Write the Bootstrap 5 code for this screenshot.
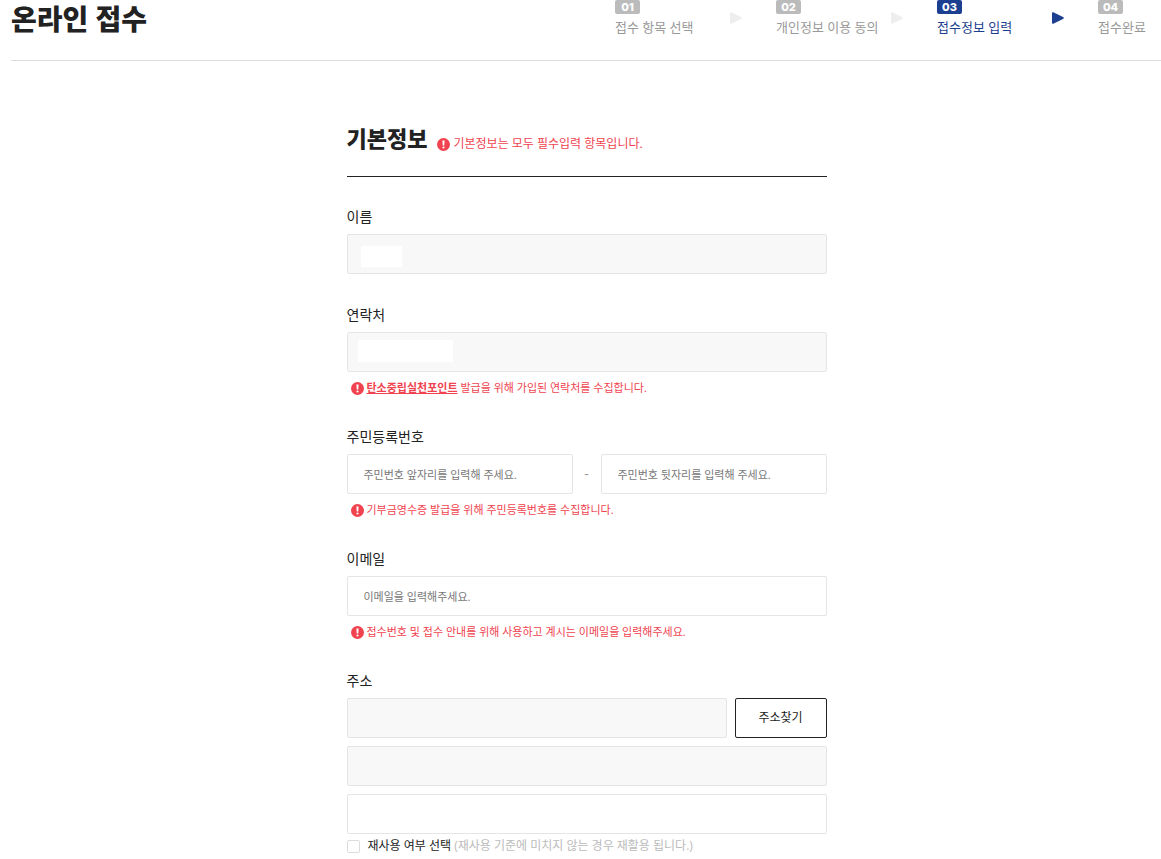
<!DOCTYPE html>
<html lang="ko">
<head>
<meta charset="utf-8">
<meta name="viewport" content="width=device-width, initial-scale=1">
<title>온라인 접수</title>
<link href="https://cdn.jsdelivr.net/npm/bootstrap@5.3.0/dist/css/bootstrap.min.css" rel="stylesheet">
<style>
  body { font-family: "Open Sans", "Noto Sans CJK KR", sans-serif; color: #222; font-size: 14px; line-height: 20px; }
  .page-head { margin-left: 11px; height: 61px; border-bottom: 1px solid #ddd; }
  .page-title { font-size: 28px; line-height: 38px; font-weight: 900; }
  .step { width: 161px; color: #999; }
  .step:last-child { width: 63px; }
  .step-no { background: #bbb; color: #fff; font: 800 11px/14px "Inter", sans-serif; width: 25px; border-radius: 2px; }
  .step-arrow { margin: 12px 34px 0 0; color: #eee; }
  .step.current { color: #1d3f8f; }
  .step.current .step-no { background: #1d3f8f; }
  .step.current .step-arrow { color: #1d3f8f; }
  .step-name { margin-top: 3px; font-size: 13px; }
  .form-wrap { max-width: 480px; }
  .form-outer { padding: 64px 0 4px 12px; }
  .section-head { padding-bottom: 24px; border-bottom: 1px solid #222; margin-bottom: 29px; }
  .section-title { font-size: 22px; line-height: 26px; font-weight: 900; }
  .notice { color: #f0434f; font-size: 11px; line-height: 16px; gap: 3px; }
  .notice a { color: inherit; font-weight: 700; }
  .section-head .notice { font-size: 12px; margin: 11px 0 0 10px; }
  .field-note { margin: 8px 0 0 4px; }
  .group { margin-bottom: 30px; }
  .group:last-child { margin-bottom: 0; }
  .group-label { display: block; margin-bottom: 6px; font-size: 14px; line-height: 22px; }
  .form-control.field { height: 40px; border: 1px solid #e5e5e5; border-radius: 2px; font-size: 11px; padding: 0 16px; color: #222; }
  .field::placeholder { color: #777; }
  .field[readonly] { background: #f8f8f8; }
  .dash { width: 28px; color: #999; }
  .mask { background: #fff; }
  .mask-name { left: 14px; top: 12px; width: 41px; height: 21px; }
  .mask-phone { left: 11px; top: 8px; width: 95px; height: 22px; }
  .btn.find { width: 92px; border: 1px solid #222; border-radius: 2px; font-size: 12px; color: #222; background: #fff; padding: 0; }
  .reuse { margin-top: 4px; font-size: 12px; line-height: 16px; gap: 8px; }
  .form-check-input.tick { width: 13px; height: 13px; margin: 0; border: 1px solid #ddd; border-radius: 2px; }
  .hint { color: #bbb; }
</style>
</head>
<body>
<svg class="d-none">
  <symbol id="alert" viewBox="0 0 13 13"><circle cx="6.500" cy="6.500" r="6.500" fill="#f0434f"/><path d="M5.400 2.500h2.200l-.3 5h-1.600z" fill="#fff"/><circle cx="6.500" cy="9.500" r="1.100" fill="#fff"/></symbol>
  <symbol id="arrow" viewBox="0 0 12 12"><path d="M0 1Q0 0 1.300 .3L11 5Q12.600 6 11 7L1.300 11.700Q0 12 0 11Z" fill="currentColor"/></symbol>
</svg>
<header class="page-head d-flex justify-content-between">
  <h1 class="page-title m-0">온라인 접수</h1>
  <ol class="list-unstyled d-flex m-0">
    <li class="step d-flex justify-content-between"><div><div class="step-no text-center">01</div><div class="step-name text-nowrap">접수 항목 선택</div></div><svg class="step-arrow flex-shrink-0" width="12" height="12"><use href="#arrow"/></svg></li>
    <li class="step d-flex justify-content-between"><div><div class="step-no text-center">02</div><div class="step-name text-nowrap">개인정보 이용 동의</div></div><svg class="step-arrow flex-shrink-0" width="12" height="12"><use href="#arrow"/></svg></li>
    <li class="step current d-flex justify-content-between" aria-current="step"><div><div class="step-no text-center">03</div><div class="step-name text-nowrap">접수정보 입력</div></div><svg class="step-arrow flex-shrink-0" width="12" height="12"><use href="#arrow"/></svg></li>
    <li class="step"><div class="step-no text-center">04</div><div class="step-name text-nowrap">접수완료</div></li>
  </ol>
</header>
<main class="form-outer">
  <form class="form-wrap mx-auto">
    <div class="section-head d-flex">
      <h2 class="section-title m-0">기본정보</h2>
      <p class="notice d-flex align-items-center mb-0"><svg width="13" height="13"><use href="#alert"/></svg><span>기본정보는 모두 필수입력 항목입니다.</span></p>
    </div>
    <div class="group">
      <label class="group-label" for="name">이름</label>
      <div class="position-relative"><input class="form-control field" id="name" type="text" readonly><span class="mask mask-name position-absolute"></span></div>
    </div>
    <div class="group">
      <label class="group-label" for="phone">연락처</label>
      <div class="position-relative"><input class="form-control field" id="phone" type="tel" readonly><span class="mask mask-phone position-absolute"></span></div>
      <p class="notice field-note d-flex align-items-center"><svg width="13" height="13"><use href="#alert"/></svg><span><a href="#">탄소중립실천포인트</a> 발급을 위해 가입된 연락처를 수집합니다.</span></p>
    </div>
    <div class="group">
      <label class="group-label" for="rrn1">주민등록번호</label>
      <div class="d-flex align-items-center">
        <input class="form-control field" id="rrn1" type="text" placeholder="주민번호 앞자리를 입력해 주세요.">
        <span class="dash flex-shrink-0 text-center">-</span>
        <input class="form-control field" type="text" aria-label="주민번호 뒷자리" placeholder="주민번호 뒷자리를 입력해 주세요.">
      </div>
      <p class="notice field-note d-flex align-items-center"><svg width="13" height="13"><use href="#alert"/></svg><span>기부금영수증 발급을 위해 주민등록번호를 수집합니다.</span></p>
    </div>
    <div class="group">
      <label class="group-label" for="email">이메일</label>
      <input class="form-control field" id="email" type="email" placeholder="이메일을 입력해주세요.">
      <p class="notice field-note d-flex align-items-center"><svg width="13" height="13"><use href="#alert"/></svg><span>접수번호 및 접수 안내를 위해 사용하고 계시는 이메일을 입력해주세요.</span></p>
    </div>
    <div class="group">
      <label class="group-label" for="addr">주소</label>
      <div class="d-grid gap-2">
        <div class="d-flex gap-2">
          <input class="form-control field" id="addr" type="text" readonly>
          <button class="btn find flex-shrink-0" type="button">주소찾기</button>
        </div>
        <input class="form-control field" type="text" aria-label="기본 주소" readonly>
        <input class="form-control field" type="text" aria-label="상세 주소">
      </div>
      <div class="reuse d-flex align-items-center">
        <input class="form-check-input tick" type="checkbox" id="reuse">
        <label for="reuse">재사용 여부 선택 <span class="hint">(재사용 기준에 미치지 않는 경우 재활용 됩니다.)</span></label>
      </div>
    </div>
  </form>
</main>
<script src="https://cdn.jsdelivr.net/npm/bootstrap@5.3.0/dist/js/bootstrap.bundle.min.js"></script>
</body>
</html>
